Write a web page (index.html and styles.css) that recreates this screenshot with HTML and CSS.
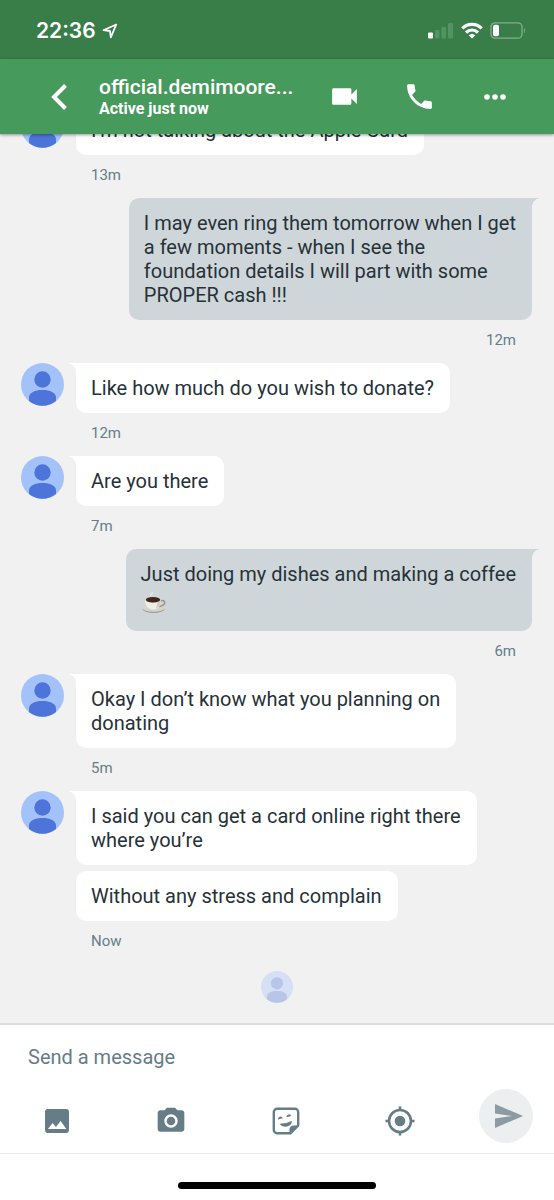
FILE: index.html
```
<!DOCTYPE html>
<html lang="en">

<head>
    <meta charset="UTF-8">
    <meta name="viewport" content="width=device-width, initial-scale=1.0">
    <title>Messages</title>
    <link rel="stylesheet" href="styles.css">
</head>

<body>
    <!-- shared avatar drawing -->
    <svg class="defs" width="0" height="0" aria-hidden="true">
        <symbol id="person" viewBox="0 0 43 43">
            <circle cx="21.5" cy="21.5" r="21.5" fill="#a4c2fa" />
            <circle cx="21.5" cy="16.5" r="8.2" fill="#4c74d9" />
            <path d="M8 38V34.500C8 29.500 14 27 21.500 27S35 29.500 35 34.500V38A21.500 21.500 0 0 1 8 38Z" fill="#4c74d9" />
        </symbol>
    </svg>

    <div class="status-bar">
        <span class="clock">22:36</span>
        <svg class="location" width="16" height="16" viewBox="0 0 16 16">
            <path d="M14.200 1.500L1.500 7.200L8 8L8.800 14.300Z" fill="none" stroke="#fff" stroke-width="1.800" stroke-linejoin="round" />
        </svg>
        <div class="status-icons">
            <svg width="26" height="17" viewBox="0 0 26 17">
                <rect x="0" y="10.500" width="5" height="6" rx="1.200" fill="#fff" />
                <g fill="#529364">
                    <rect x="7" y="8" width="4.500" height="8.500" rx="1" />
                    <rect x="13.500" y="5" width="4.500" height="11.500" rx="1" />
                    <rect x="20" y="1" width="5" height="15.500" rx="1" />
                </g>
            </svg>
            <svg width="22" height="17" viewBox="0 0 22 17">
                <g fill="none" stroke="#fff" stroke-width="3.200">
                    <path d="M1.300 6.300A14 14 0 0 1 20.700 6.300" />
                    <path d="M5 10.500A8.500 8.500 0 0 1 17 10.500" />
                </g>
                <path d="M11 16.500L7.600 13.300A5 5 0 0 1 14.400 13.300Z" fill="#fff" />
            </svg>
            <svg width="36" height="17" viewBox="0 0 36 17">
                <rect x="1" y="0.800" width="31" height="15.400" rx="4" fill="none" stroke="#83b08e" stroke-width="1.300" />
                <rect x="3" y="2.800" width="6" height="11.400" rx="2" fill="#fff" />
                <path d="M34 5.500Q36 8.500 34 11.500Z" fill="#83b08e" />
            </svg>
        </div>
    </div>

    <header class="top-bar">
        <button class="back" type="button" aria-label="Back">
            <svg width="16" height="26" viewBox="0 0 16 26">
                <path d="M14.500 1.500L3 13L14.500 24.500" fill="none" stroke="#fff" stroke-width="4" />
            </svg>
        </button>
        <div class="contact">
            <h1>official.demimoore...</h1>
            <p>Active just now</p>
        </div>
        <button class="action" type="button" aria-label="Video call">
            <svg width="33" height="33" viewBox="0 0 24 24">
                <path d="M17 10.500V7c0-.55-.45-1-1-1H4c-.55 0-1 .45-1 1v10c0 .55.45 1 1 1h12c.55 0 1-.45 1-1v-3.500l4 4v-11l-4 4z" />
            </svg>
        </button>
        <button class="action" type="button" aria-label="Call">
            <svg width="33" height="33" viewBox="0 0 24 24">
                <path d="M6.620 10.790c1.440 2.830 3.760 5.140 6.590 6.590l2.200-2.200c.27-.27.67-.36 1.020-.24 1.120.37 2.330.57 3.570.57.55 0 1 .45 1 1V20c0 .55-.45 1-1 1-9.390 0-17-7.610-17-17 0-.55.45-1 1-1h3.500c.55 0 1 .45 1 1 0 1.250.2 2.450.57 3.570.11.35.03.74-.25 1.020l-2.200 2.200z" />
            </svg>
        </button>
        <button class="action" type="button" aria-label="More">
            <svg width="22" height="6" viewBox="0 0 22 6">
                <circle cx="3" cy="3" r="2.800" />
                <circle cx="11" cy="3" r="2.800" />
                <circle cx="19" cy="3" r="2.800" />
            </svg>
        </button>
    </header>

    <main class="chat">
        <div class="message">
            <svg class="avatar"><use href="#person" /></svg>
            <p class="bubble tail">I’m not talking about the Apple Card</p>
        </div>
        <time class="stamp">13m</time>

        <div class="message sent">
            <p class="bubble tail">I may even ring them tomorrow when I get<br>a few moments - when I see the<br>foundation details I will part with some<br>PROPER cash !!!</p>
        </div>
        <time class="stamp sent">12m</time>

        <div class="message">
            <svg class="avatar"><use href="#person" /></svg>
            <p class="bubble tail">Like how much do you wish to donate?</p>
        </div>
        <time class="stamp">12m</time>

        <div class="message">
            <svg class="avatar"><use href="#person" /></svg>
            <p class="bubble tail">Are you there</p>
        </div>
        <time class="stamp">7m</time>

        <div class="message sent">
            <p class="bubble tail">Just doing my dishes and making a coffee
                <svg class="coffee" width="25" height="24" viewBox="0 0 25 24" role="img" aria-label="coffee">
                    <path d="M10 5Q9 4 10.500 3T11 1" fill="none" stroke="#e6e9e8" stroke-width="1.200" />
                    <ellipse cx="12.500" cy="18" rx="11" ry="4" fill="#a09f95" />
                    <ellipse cx="12.500" cy="17" rx="11" ry="3.800" fill="#d6d4ca" />
                    <path d="M19 10C25 8 26 14 18 15.500" fill="none" stroke="#98958a" stroke-width="1.500" />
                    <path d="M4 8.500C4 15 7 18.500 12 18.500S20 15 20 8.500Z" fill="#efede6" />
                    <path d="M15 17.500C18.500 16 20 13 20 8.500L17 10Z" fill="#cfccc1" />
                    <ellipse cx="12" cy="8.500" rx="8" ry="3.400" fill="#d8d4c8" />
                    <ellipse cx="12" cy="8.800" rx="7.200" ry="2.800" fill="#3e2720" />
                </svg>
            </p>
        </div>
        <time class="stamp sent">6m</time>

        <div class="message">
            <svg class="avatar"><use href="#person" /></svg>
            <p class="bubble tail">Okay I don’t know what you planning on<br>donating</p>
        </div>
        <time class="stamp">5m</time>

        <div class="message">
            <svg class="avatar"><use href="#person" /></svg>
            <p class="bubble tail">I said you can get a card online right there<br>where you’re</p>
        </div>
        <div class="message follow-up">
            <p class="bubble">Without any stress and complain</p>
        </div>
        <time class="stamp">Now</time>

        <svg class="seen"><use href="#person" /></svg>
    </main>

    <form class="composer">
        <input class="message-input" type="text" placeholder="Send a message" aria-label="Send a message">
        <div class="tools">
            <button class="tool" type="button" aria-label="Photo">
                <svg width="32" height="32" viewBox="0 0 24 24">
                    <path d="M21 19V5c0-1.100-.9-2-2-2H5c-1.100 0-2 .9-2 2v14c0 1.100.9 2 2 2h14c1.100 0 2-.9 2-2zM5.200 18L8.700 13.500l2.500 3.010L14.700 12l4.300 6z" />
                </svg>
            </button>
            <button class="tool" type="button" aria-label="Camera">
                <svg width="32" height="32" viewBox="0 0 24 24">
                    <circle cx="12" cy="12" r="3.200" />
                    <path d="M9 2L7.170 4H4c-1.100 0-2 .9-2 2v12c0 1.100.9 2 2 2h16c1.100 0 2-.9 2-2V6c0-1.100-.9-2-2-2h-3.170L15 2H9zm3 15c-2.760 0-5-2.240-5-5s2.240-5 5-5 5 2.240 5 5-2.240 5-5 5z" />
                </svg>
            </button>
            <button class="tool" type="button" aria-label="Sticker">
                <svg width="28" height="28" viewBox="0 0 28 28">
                    <path d="M5 1.800H23A3.200 3.200 0 0 1 26.200 5V18.500L18.500 26.200H5A3.200 3.200 0 0 1 1.800 23V5A3.200 3.200 0 0 1 5 1.800Z" fill="none" stroke="#667d88" stroke-width="2.400" />
                    <path d="M17.500 27V22Q18 18.500 21.500 18.500H27Z" />
                    <path d="M7.300 16.800Q14 17 20 13.700Q19.500 18.500 15 19.600Q10 20.500 7.300 16.800Z" />
                    <path d="M6 12.500A2.500 2.500 0 0 1 10.800 11.200ZM14.500 10.200A2.500 2.500 0 0 1 19.300 8.900Z" />
                </svg>
            </button>
            <button class="tool" type="button" aria-label="Location">
                <svg width="30" height="30" viewBox="0 0 30 30">
                    <circle cx="15" cy="15" r="11" fill="none" stroke="#667d88" stroke-width="2.600" />
                    <circle cx="15" cy="15" r="5.300" />
                    <path d="M13.700 0.500h2.600v4h-2.600zM13.700 25.500h2.600v4h-2.600zM0.500 13.700h4v2.600h-4zM25.500 13.700h4v2.600h-4z" />
                </svg>
            </button>
            <button class="send" type="submit" aria-label="Send">
                <svg width="28" height="24" viewBox="0 0 28 24">
                    <path d="M0 0L28 12L0 24V14.500L17 12L0 9.500Z" />
                </svg>
            </button>
        </div>
    </form>

    <footer class="home-area">
        <div class="home-indicator"></div>
    </footer>
</body>

</html>
```
FILE: styles.css
```
* {
    box-sizing: border-box;
}

body {
    margin: 0;
    height: 100vh;
    display: flex;
    flex-direction: column;
    font-family: Roboto, "Liberation Sans", sans-serif;
    color: #263238;
    background-color: #fff;
}

h1,
p {
    margin: 0;
}

button {
    display: flex;
    align-items: center;
    justify-content: center;
    padding: 0;
    border: 0;
    background: none;
    cursor: pointer;
}

.defs {
    position: absolute;
}

/* status bar */
.status-bar {
    flex: none;
    display: flex;
    align-items: center;
    height: 59px;
    padding: 2px 28px 0 36px;
    background-color: #397d49;
    color: #fff;
}

.clock {
    font-family: Inter, Roboto, sans-serif;
    font-size: 21px;
    font-weight: 600;
}

.location {
    margin-left: 6px;
}

.status-icons {
    display: flex;
    gap: 7px;
    margin-left: auto;
}

/* header */
.top-bar {
    flex: none;
    display: flex;
    align-items: center;
    height: 75px;
    padding-right: 22px;
    background-color: #469a5c;
    color: #fff;
    box-shadow: 0 1px 3px rgba(0, 0, 0, .4);
    z-index: 1;
}

.back {
    width: 99px;
    height: 75px;
    padding-left: 19px;
}

.contact {
    flex: 1;
    min-width: 0;
}

.contact h1 {
    font-size: 21px;
    font-weight: 500;
    line-height: 24px;
    white-space: nowrap;
}

.contact p {
    font-size: 16px;
    font-weight: 700;
    line-height: 20px;
}

.action {
    width: 75px;
    height: 75px;
    fill: #fff;
}

/* conversation */
.chat {
    flex: 1;
    min-height: 0;
    display: flex;
    flex-direction: column;
    justify-content: flex-end;
    padding: 0 22px 20px 21px;
    overflow: hidden;
    background-color: #f1f1f1;
}

.message {
    flex: none;
    display: flex;
    align-items: flex-start;
    gap: 12px;
}

.message.sent {
    justify-content: flex-end;
}

.follow-up {
    margin-top: 6px;
    padding-left: 55px;
}

.avatar {
    flex: none;
    width: 43px;
    height: 43px;
}

.bubble {
    position: relative;
    max-width: 412px;
    padding: 13px 16px 13px 15px;
    border-radius: 10px;
    background-color: #fff;
    font-size: 20px;
    line-height: 24px;
}

.sent .bubble {
    background-color: #cfd6da;
}

.bubble.tail {
    border-top-left-radius: 0;
}

.sent .bubble.tail {
    border-top-left-radius: 10px;
    border-top-right-radius: 0;
}

/* little hook on the top corner */
.tail::before {
    content: "";
    position: absolute;
    top: 0;
    right: 100%;
    width: 8px;
    height: 9px;
    background: radial-gradient(8px 9px at 0 100%, transparent 95%, #fff);
}

.sent .tail::before {
    right: auto;
    left: 100%;
    background: radial-gradient(8px 9px at 100% 100%, transparent 95%, #cfd6da);
}

.coffee {
    display: block;
    margin: 5px 0 3px;
}

.stamp {
    flex: none;
    height: 43px;
    padding: 10px 0 13px 70px;
    font-size: 15px;
    line-height: 20px;
    color: #667d88;
}

.stamp.sent {
    padding-right: 16px;
    text-align: right;
}

.seen {
    flex: none;
    align-self: center;
    width: 32px;
    height: 32px;
    margin-top: 7px;
    opacity: .35;
}

/* composer */
.composer {
    flex: none;
    border-top: 2px solid #dcdcdc;
    border-bottom: 1px solid #ececec;
}

.message-input {
    display: block;
    width: 100%;
    height: 64px;
    padding: 0 28px;
    border: 0;
    outline: 0;
    background: none;
    font: inherit;
    font-size: 20px;
    color: inherit;
}

.message-input::placeholder {
    color: #667d88;
    opacity: 1;
}

.tools {
    display: flex;
    height: 64px;
}

.tool {
    flex: 1;
    fill: #667d88;
}

.send {
    width: 54px;
    height: 54px;
    margin: 0 21px 0 22px;
    padding-left: 6px;
    border-radius: 50%;
    background-color: #eceeef;
    fill: #8c9ba3;
}

.home-area {
    flex: none;
    height: 46px;
    padding-top: 28px;
}

.home-indicator {
    width: 198px;
    height: 7px;
    margin: 0 auto;
    border-radius: 4px;
    background-color: #000;
}
```
